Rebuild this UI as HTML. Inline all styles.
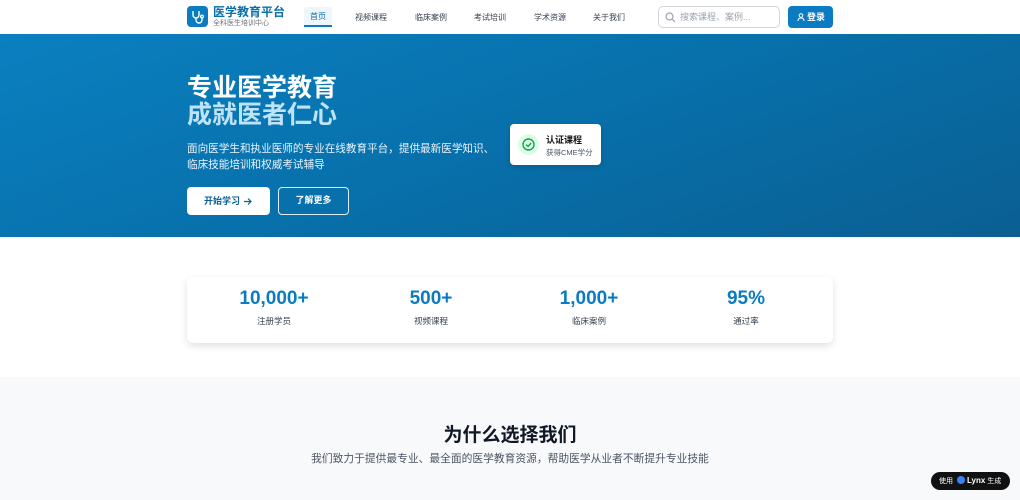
<!DOCTYPE html>
<html><head><meta charset="utf-8"><style>
*{margin:0;padding:0;box-sizing:border-box}
body{width:1020px;height:500px;overflow:hidden;font-family:"Liberation Sans","Noto Sans CJK SC",sans-serif;background:#fff;position:relative;color:#1f2937}
.hdr{position:absolute;top:0;left:0;width:1020px;height:34px;background:#fff}
.logo{position:absolute;left:187px;top:6px;width:21px;height:21px;background:#0b7cc1;border-radius:4px}
.bt{position:absolute;left:213px;top:5px;font-size:12px;line-height:14px;font-weight:700;color:#0b6ea8}
.bs{position:absolute;left:213px;top:20px;font-size:7px;line-height:8px;color:#6b7280}
.nav{position:absolute;top:12px;font-size:8px;color:#374151}
.act{position:absolute;left:304px;top:7px;width:28px;height:20px;background:#eef6fc;border-bottom:2px solid #0b7cc1;border-radius:3px 3px 0 0;color:#0b6ea8;font-size:8px;text-align:center;line-height:19px}
.search{position:absolute;left:658px;top:6px;width:122px;height:22px;border:1px solid #d1d5db;border-radius:5px;font-size:9px;line-height:20px;color:#9ca3af;padding:0 0 0 21px}
.login{position:absolute;left:788px;top:6px;width:45px;height:22px;background:#0b7cc1;border-radius:4px;color:#fff;font-size:9px;font-weight:700;line-height:22px;padding-left:19px}
.hero{position:absolute;top:34px;left:0;width:1020px;height:203px;background:linear-gradient(160deg,#0a80c0 0%,#0870ab 50%,#0a5f92 100%)}
h1{position:absolute;left:187px;top:75px;font-size:25px;line-height:27px;color:#fff;font-weight:700}
h1 span{color:#bde3f6}
.p{position:absolute;left:187px;top:141px;font-size:10.6px;line-height:16px;color:#eaf4fb}
.b1{position:absolute;left:187px;top:187px;width:83px;height:28px;background:#fff;border-radius:4px;color:#0b5f92;font-size:9px;font-weight:700;line-height:28px;padding-left:17px}
.b2{position:absolute;left:278px;top:187px;width:71px;height:28px;border:1.5px solid #e0eef8;border-radius:4px;color:#fff;font-size:9px;font-weight:700;line-height:25px;text-align:center}
.card{position:absolute;left:510px;top:124px;width:91px;height:41px;background:#fff;border-radius:4px;box-shadow:0 2px 6px rgba(0,0,0,.15)}
.stats{position:absolute;left:187px;top:277px;width:646px;height:66px;background:#fff;border-radius:6px;box-shadow:0 3px 8px rgba(0,0,0,.12)}
.st{position:absolute;top:11px;width:160px;text-align:center}
.st b{display:block;font-size:19px;color:#0b7cc1;font-weight:700;line-height:21px}
.st i{display:block;font-style:normal;font-size:8.5px;color:#374151;margin-top:6px}
.gray{position:absolute;top:377px;left:0;width:1020px;height:123px;background:#f8f9fa}
h2{position:absolute;top:420px;width:1020px;text-align:center;font-size:19px;color:#111827}
.sub{position:absolute;top:451px;width:1020px;text-align:center;font-size:10.75px;color:#4b5563}
.lynx{position:absolute;left:931px;top:472px;width:79px;height:18px;background:#111;border-radius:9px;color:#fff;font-size:7px;line-height:18px;padding-left:8px}
</style></head><body>
<div class="hdr">
<div class="logo"><svg width="21" height="21" viewBox="0 0 21 21" fill="none" stroke="#fff" stroke-width="1.4"><path d="M6 5v4a3 3 0 0 0 6 0V5M9 12v2a3 3 0 0 0 6 0v-2"/><circle cx="15" cy="10.5" r="1.3"/></svg></div>
<div class="bt">医学教育平台</div><div class="bs">全科医生培训中心</div>
<div class="act">首页</div>
<div class="nav" style="left:355px">视频课程</div>
<div class="nav" style="left:415px">临床案例</div>
<div class="nav" style="left:474px">考试培训</div>
<div class="nav" style="left:534px">学术资源</div>
<div class="nav" style="left:593px">关于我们</div>
<div class="search"><svg style="position:absolute;left:6px;top:5px" width="11" height="11" viewBox="0 0 11 11" fill="none" stroke="#9ca3af" stroke-width="1.2"><circle cx="4.5" cy="4.5" r="3.5"/><path d="M7 7l3 3"/></svg>搜索课程、案例...</div>
<div class="login"><svg style="position:absolute;left:9px;top:7px" width="8" height="8" viewBox="0 0 8 8" fill="none" stroke="#fff" stroke-width="1"><circle cx="4" cy="2.5" r="1.8"/><path d="M1 8c0-2 1.3-3 3-3s3 1 3 3"/></svg>登录</div>
</div>
<div class="hero"></div>
<h1>专业医学教育<br><span>成就医者仁心</span></h1>
<div class="p">面向医学生和执业医师的专业在线教育平台，提供最新医学知识、<br>临床技能培训和权威考试辅导</div>
<div class="b1">开始学习<svg style="position:absolute;left:56px;top:10px" width="9" height="9" viewBox="0 0 9 9" fill="none" stroke="#0b5f92" stroke-width="1.2"><path d="M1 4.5h7M5 1.5l3 3-3 3"/></svg></div>
<div class="b2">了解更多</div>
<div class="card"><div style="position:absolute;left:8px;top:10px;width:21px;height:21px;border-radius:50%;background:#dcfce7"><svg width="21" height="21" viewBox="0 0 21 21" fill="none" stroke="#16a34a" stroke-width="1.4"><circle cx="10.5" cy="10.5" r="5.5"/><path d="M8 10.5l2 2 3.2-3.5"/></svg></div>
<div style="position:absolute;left:36px;top:9px;font-size:9px;font-weight:700;color:#111">认证课程</div>
<div style="position:absolute;left:36px;top:23px;font-size:7.5px;color:#4b5563">获得CME学分</div></div>
<div class="stats">
<div class="st" style="left:7px"><b>10,000+</b><i>注册学员</i></div>
<div class="st" style="left:164px"><b>500+</b><i>视频课程</i></div>
<div class="st" style="left:322px"><b>1,000+</b><i>临床案例</i></div>
<div class="st" style="left:479px"><b>95%</b><i>通过率</i></div>
</div>
<div class="gray"></div>
<h2>为什么选择我们</h2>
<div class="sub">我们致力于提供最专业、最全面的医学教育资源，帮助医学从业者不断提升专业技能</div>
<div class="lynx">使用 <span style="display:inline-block;width:8px;height:8px;border-radius:50%;background:#3b82f6;vertical-align:-1px;margin:0 2px"></span><b style="font-size:8px">Lynx</b> 生成</div>
</body></html>
